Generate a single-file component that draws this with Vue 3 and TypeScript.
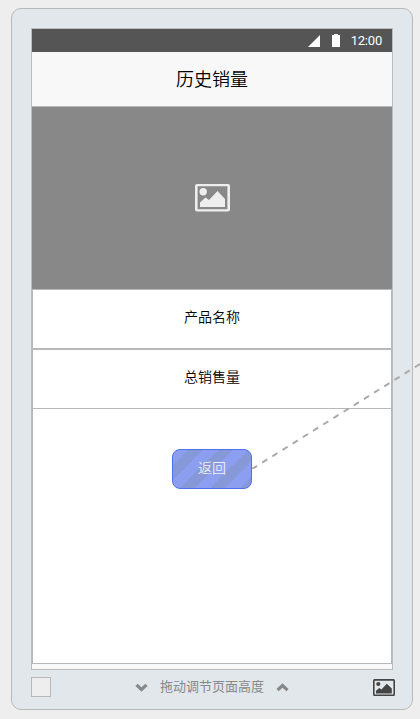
<script setup lang="ts">
const title = '历史销量'
const clock = '12:00'
const fields: string[] = ['产品名称', '总销售量']
const hint = '拖动调节页面高度'
const backLabel = '返回'
</script>

<template>
  <div class="canvas">
    <div class="device">
      <main class="screen">
        <div class="status">
          <svg class="signal" viewBox="0 0 12 12"><path d="M12 0V12H0Z" /></svg>
          <svg class="battery" viewBox="0 0 8 13"><path d="M2 0H6V1H8V13H0V1H2Z" /></svg>
          <span>{{ clock }}</span>
        </div>
        <header class="title">{{ title }}</header>
        <div class="banner">
          <svg viewBox="0 0 35 28">
            <path fill-rule="evenodd" d="M2 0H33Q35 0 35 2V25.5Q35 27.5 33 27.5H2Q0 27.5 0 25.5V2Q0 0 2 0ZM2.6 2.2V25.2H32.4V2.2Z" />
            <circle cx="8.2" cy="7.7" r="3.7" />
            <path d="M5 23V18.5L10.5 13.5L14 16L22.5 7L30 15V23Z" />
          </svg>
        </div>
        <div v-for="field in fields" :key="field" class="field">{{ field }}</div>
        <div class="content">
          <button class="back" type="button">{{ backLabel }}</button>
        </div>
      </main>
      <footer class="toolbar">
        <span class="swatch"></span>
        <div class="resize">
          <svg viewBox="0 0 13 9"><path d="M1.5 1.8L6.5 6.5L11.5 1.8" /></svg>
          <span>{{ hint }}</span>
          <svg viewBox="0 0 13 9"><path d="M1.5 7.2L6.5 2.5L11.5 7.2" /></svg>
        </div>
        <svg class="picture" viewBox="0 0 22 17">
          <path fill-rule="evenodd" d="M1.5 0H20.5Q22 0 22 1.5V15.5Q22 17 20.5 17H1.5Q0 17 0 15.5V1.5Q0 0 1.5 0ZM1.6 1.7V15.5H20.4V1.7Z" />
          <circle cx="5.3" cy="5" r="2.1" />
          <path d="M3 14.5V11.7L6.2 9L8.4 10.4L13.8 4.8L18.8 9.4V14.5Z" />
        </svg>
      </footer>
    </div>
    <svg class="link" viewBox="0 0 168 106"><path d="M0 106L168 1" /></svg>
  </div>
</template>

<style>
body {
  background: #eee;
  overflow: hidden;
}
</style>

<style scoped>
.canvas {
  position: relative;
  box-sizing: border-box;
  width: 420px;
  height: 719px;
  padding: 8px 0 0 11px;
  overflow: hidden;
  background: #eee;
  font-family: Roboto, "Noto Sans CJK SC", sans-serif;
}
.canvas * {
  box-sizing: border-box;
}
svg {
  display: block;
}
.device {
  width: 402px;
  height: 702px;
  padding: 19px;
  border: 1px solid #b8baba;
  border-radius: 10px;
  background: #e1e7ea;
}
.screen {
  display: flex;
  flex-direction: column;
  width: 362px;
  height: 642px;
  border: 1px solid #b9bcbc;
  background: #f8f8f8;
}
.status {
  display: flex;
  align-items: center;
  justify-content: flex-end;
  flex: none;
  height: 23px;
  padding-right: 10px;
  background: #555;
  color: #fff;
  font-size: 13px;
  font-weight: 400;
  letter-spacing: -0.2px;
}
.status svg {
  fill: #fff;
}
.signal {
  width: 12px;
  height: 12px;
  margin-right: 12px;
}
.battery {
  width: 8px;
  height: 13px;
  margin-right: 11px;
}
.title {
  flex: none;
  height: 55px;
  border-bottom: 1px solid #b8b8b8;
  color: #000;
  font-size: 18px;
  font-weight: 350;
  line-height: 55px;
  text-align: center;
}
.banner {
  display: flex;
  flex: none;
  align-items: center;
  justify-content: center;
  height: 182px;
  background: #888;
}
.banner svg {
  width: 35px;
  height: 28px;
  fill: #eee;
}
.field {
  flex: none;
  height: 60px;
  border: 1px solid #b8b8b8;
  background: #fff;
  color: #000;
  font-size: 14px;
  font-weight: 350;
  line-height: 54px;
  text-align: center;
}
.content {
  flex: none;
  height: 255px;
  padding-top: 40px;
  border: solid #b8b8b8;
  border-width: 0 1px 1px;
  background: #fff;
}
.back {
  display: block;
  width: 80px;
  height: 40px;
  margin: 0 auto;
  padding: 0 0 2px;
  border: 1px solid #4f70ee;
  border-radius: 8px;
  background: linear-gradient(-45deg, #8798d8 25%, #8c9eef 25%, #8c9eef 50%, #8798d8 50%, #8798d8 75%, #8c9eef 75%) 0 0 / 30px 30px;
  color: #eee;
  font: 350 14px/36px Roboto, "Noto Sans CJK SC", sans-serif;
}
.toolbar {
  display: flex;
  align-items: center;
  justify-content: space-between;
  width: 364px;
  height: 34px;
}
.swatch {
  width: 20px;
  height: 20px;
  border: 1px solid #b8b8b8;
  background: #eee;
}
.resize {
  display: flex;
  align-items: center;
  gap: 11.5px;
  color: #888;
  font-size: 13px;
  line-height: 20px;
}
.resize svg {
  width: 13px;
  height: 9px;
  margin-top: 1px;
  fill: none;
  stroke: #888;
  stroke-width: 3.2;
}
.picture {
  width: 22px;
  height: 17px;
  fill: #444;
}
.link {
  position: absolute;
  top: 363px;
  left: 252px;
  width: 168px;
  height: 106px;
  fill: none;
  stroke: #aaa;
  stroke-width: 2;
  stroke-dasharray: 6 6;
}
</style>
